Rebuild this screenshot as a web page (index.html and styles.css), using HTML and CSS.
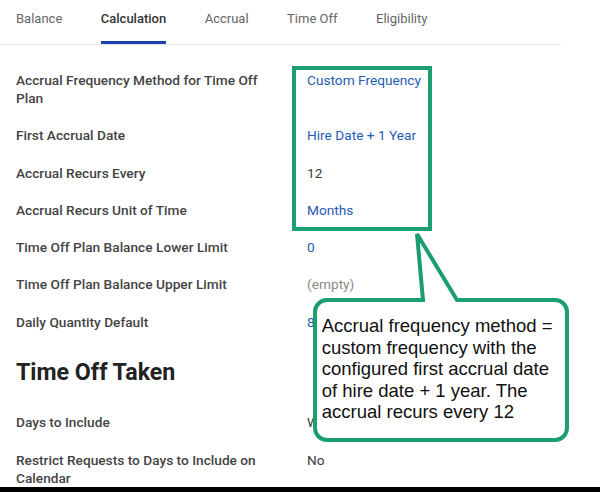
FILE: index.html
```html
<!DOCTYPE html>
<html lang="en">
<head>
    <meta charset="UTF-8">
    <meta name="viewport" content="width=device-width, initial-scale=1.0">
    <title>Time Off Plan - Calculation</title>
    <link rel="stylesheet" href="styles.css">
</head>
<body>
    <div class="page">
        <nav class="tabs">
            <a class="tab">Balance</a>
            <a class="tab active">Calculation</a>
            <a class="tab">Accrual</a>
            <a class="tab">Time Off</a>
            <a class="tab">Eligibility</a>
        </nav>

        <dl class="fields first">
            <dt>Accrual Frequency Method for Time Off Plan</dt>
            <dd class="link">Custom Frequency</dd>
            <dt>First Accrual Date</dt>
            <dd class="link">Hire Date + 1 Year</dd>
            <dt>Accrual Recurs Every</dt>
            <dd>12</dd>
            <dt>Accrual Recurs Unit of Time</dt>
            <dd class="link">Months</dd>
            <dt>Time Off Plan Balance Lower Limit</dt>
            <dd class="link">0</dd>
            <dt>Time Off Plan Balance Upper Limit</dt>
            <dd class="empty">(empty)</dd>
            <dt>Daily Quantity Default</dt>
            <dd class="link">8</dd>
        </dl>

        <h2 class="section-title">Time Off Taken</h2>

        <dl class="fields">
            <dt>Days to Include</dt>
            <dd>W</dd>
            <dt>Restrict Requests to Days to Include on Calendar</dt>
            <dd>No</dd>
        </dl>

        <!-- annotation layer -->
        <div class="highlight"></div>
        <div class="callout">
            <svg class="callout-shape" width="258" height="214" viewBox="0 0 258 214">
                <path d="M110 70 L104 4 L144 70 H242 A12 12 0 0 1 254 82 V198 A12 12 0 0 1 242 210 H14 A12 12 0 0 1 2 198 V82 A12 12 0 0 1 14 70 Z"/>
            </svg>
            <p class="callout-text">Accrual frequency method = custom frequency with the configured first accrual date of hire date + 1 year. The accrual recurs every 12</p>
        </div>
        <div class="bottom-bar"></div>
    </div>
</body>
</html>
```

FILE: styles.css
```css
body { margin: 0; background: #fff; font-family: Roboto, "Noto Sans", sans-serif; color: #444; }
.page { position: relative; width: 600px; height: 492px; overflow: hidden; }

/* tabs */
.tabs { display: flex; gap: 38.5px; width: 561px; box-sizing: border-box; padding-left: 16px; border-bottom: 1px solid #e4e4e4; }
.tab { padding: 10px 0 13px; font-size: 13px; line-height: 18px; color: #666; border-bottom: 3px solid transparent; cursor: pointer; }
.tab.active { color: #333; font-weight: 500; border-bottom-color: #1c3fae; }

/* label / value rows */
.fields { display: grid; grid-template-columns: 260px 1fr; column-gap: 31px; row-gap: 19.3px; margin: 28.6px 0 0; padding: 0 16px; font-size: 13.7px; line-height: 18px; }
.fields.first { margin-top: 26px; }
.fields dt { font-weight: 500; color: #444; }
.fields dd { margin: 0; color: #3a3a3a; }
.fields dd.link { color: #1f5bb5; }
.fields dd.empty { color: #888; }

.section-title { margin: 27.9px 0 0; padding-left: 16px; font-size: 23.2px; line-height: 26px; font-weight: 700; color: #222; }

/* annotation */
.highlight { position: absolute; left: 292px; top: 66px; width: 140px; height: 165px; box-sizing: border-box; border: 4px solid #1b9e70; }
.callout { position: absolute; left: 313px; top: 230px; width: 258px; height: 214px; }
.callout-shape { position: absolute; left: 0; top: 0; }
.callout-shape path { fill: #fff; stroke: #1b9e70; stroke-width: 4; }
.callout-text { position: absolute; left: 8.7px; top: 85px; width: 241px; margin: 0; font-family: "Liberation Sans", Arial, sans-serif; font-size: 18.5px; line-height: 21.5px; color: #111; }

.bottom-bar { position: absolute; left: 0; right: 0; bottom: 0; height: 5px; background: #000; }
```
